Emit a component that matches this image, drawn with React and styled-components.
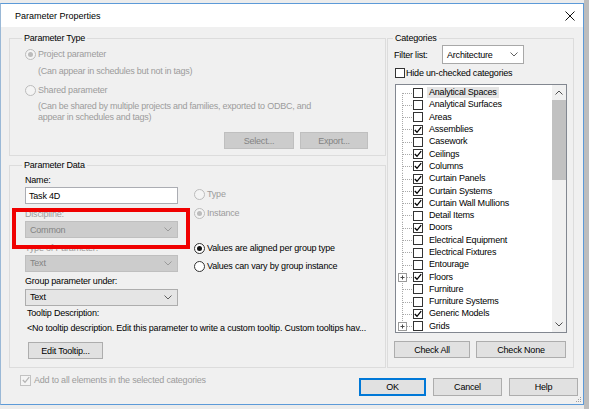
import styled, { createGlobalStyle } from "styled-components"

const GlobalStyle = createGlobalStyle`
  html, body {
    margin: 0;
    padding: 0;
    background: #c6c6c6;
  }
  body {
    font-family: "Liberation Sans", Arial, sans-serif;
    font-size: 9px;
    letter-spacing: -0.2px;
    color: #000;
  }
  * {
    box-sizing: border-box;
  }
  button, input {
    font-family: inherit;
    font-size: inherit;
    letter-spacing: inherit;
  }
`

const categories = [
  { name: "Analytical Spaces", selected: true },
  { name: "Analytical Surfaces" },
  { name: "Areas" },
  { name: "Assemblies", checked: true },
  { name: "Casework" },
  { name: "Ceilings", checked: true },
  { name: "Columns", checked: true },
  { name: "Curtain Panels", checked: true },
  { name: "Curtain Systems", checked: true },
  { name: "Curtain Wall Mullions", checked: true },
  { name: "Detail Items" },
  { name: "Doors", checked: true },
  { name: "Electrical Equipment" },
  { name: "Electrical Fixtures" },
  { name: "Entourage" },
  { name: "Floors", checked: true, expandable: true },
  { name: "Furniture" },
  { name: "Furniture Systems" },
  { name: "Generic Models", checked: true },
  { name: "Grids", expandable: true },
]

function Radio({ label, checked, disabled }) {
  return (
    <OptionRow $disabled={disabled}>
      <RadioCircle $checked={checked} $disabled={disabled} />
      <span>{label}</span>
    </OptionRow>
  )
}

function Check({ disabled, dark }) {
  return (
    <CheckBox $disabled={disabled} $dark={dark}>
      <svg width="8" height="8" viewBox="0 0 8 8">
        <polyline points="0.8,4 3,6.3 7.2,1.2" fill="none" stroke={disabled ? "#b5b5b5" : "#000"} strokeWidth="1.3" />
      </svg>
    </CheckBox>
  )
}

function Chevron({ color = "#606060", up }) {
  return (
    <svg width="8" height="5" viewBox="0 0 8 5">
      <polyline points={up ? "0.5,4.5 4,1 7.5,4.5" : "0.5,0.5 4,4 7.5,0.5"} fill="none" stroke={color} strokeWidth="1" />
    </svg>
  )
}

function Select({ value, disabled, white, width }) {
  return (
    <SelectBox $disabled={disabled} $white={white} $width={width}>
      <span>{value}</span>
      <Chevron color={disabled ? "#9a9a9a" : "#606060"} />
    </SelectBox>
  )
}

function TreeLines({ first, expandable }) {
  return (
    <svg width="17" height="12.3" viewBox="0 0 17 12.3">
      <line x1="6.5" y1={first ? 6 : 0} x2="6.5" y2="12.3" stroke="#a8a8a8" strokeDasharray="1 1" />
      <line x1={expandable ? 11 : 7} y1="6.5" x2="16" y2="6.5" stroke="#a8a8a8" strokeDasharray="1 1" />
      {expandable && (
        <g>
          <rect x="2.5" y="2.5" width="8" height="8" fill="#fff" stroke="#9a9a9a" />
          <line x1="4.5" y1="6.5" x2="8.5" y2="6.5" stroke="#4a4a4a" />
          <line x1="6.5" y1="4.5" x2="6.5" y2="8.5" stroke="#4a4a4a" />
        </g>
      )}
    </svg>
  )
}

export default function App() {
  return (
    <>
      <GlobalStyle />
      <Page>
        <Dialog>
          <TitleBar>
            <Title>Parameter Properties</Title>
            <CloseBox>
              <svg width="10" height="10" viewBox="0 0 10 10">
                <line x1="0.5" y1="0.5" x2="9.5" y2="9.5" stroke="#111" strokeWidth="1" />
                <line x1="9.5" y1="0.5" x2="0.5" y2="9.5" stroke="#111" strokeWidth="1" />
              </svg>
            </CloseBox>
          </TitleBar>

          <Body>
            <Main>
              <LeftColumn>
                <Group $height={124}>
                  <Legend>Parameter Type</Legend>
                  <Spacer $h={4} />
                  <Radio label="Project parameter" checked disabled />
                  <Spacer $h={5.5} />
                  <Note $disabled>(Can appear in schedules but not in tags)</Note>
                  <Spacer $h={7.5} />
                  <Radio label="Shared parameter" disabled />
                  <Spacer $h={4.5} />
                  <Note $disabled>
                    (Can be shared by multiple projects and families, exported to ODBC, and
                    <br />
                    appear in schedules and tags)
                  </Note>
                  <Spacer $h={9.5} />
                  <ButtonRow>
                    <Button $disabled $width={70}>Select...</Button>
                    <Button $disabled $width={68}>Export...</Button>
                  </ButtonRow>
                </Group>

                <Group $height={209} $top={3}>
                  <Legend>Parameter Data</Legend>
                  <FieldsRow>
                    <FieldColumn>
                      <Spacer $h={3.5} />
                      <FieldLabel>Name:</FieldLabel>
                      <Spacer $h={1.5} />
                      <TextInput>Task 4D</TextInput>
                      <Spacer $h={4.5} />
                      <FieldLabel $disabled>Discipline:</FieldLabel>
                      <Spacer $h={1.5} />
                      <Select value="Common" disabled />
                      <Spacer $h={4.5} />
                      <FieldLabel $disabled>Type of Parameter:</FieldLabel>
                      <Spacer $h={1} />
                      <Select value="Text" disabled />
                      <Spacer $h={4} />
                      <FieldLabel>Group parameter under:</FieldLabel>
                      <Spacer $h={2} />
                      <Select value="Text" />
                    </FieldColumn>
                    <RadioColumn>
                      <Spacer $h={17} />
                      <Radio label="Type" disabled />
                      <Spacer $h={7} />
                      <Radio label="Instance" checked disabled />
                      <Spacer $h={23} />
                      <Radio label="Values are aligned per group type" checked />
                      <Spacer $h={6} />
                      <Radio label="Values can vary by group instance" />
                    </RadioColumn>
                  </FieldsRow>
                  <Spacer $h={2} />
                  <TooltipText>Tooltip Description:</TooltipText>
                  <Spacer $h={4} />
                  <TooltipText>
                    &lt;No tooltip description. Edit this parameter to write a custom tooltip. Custom tooltips hav...
                  </TooltipText>
                  <Spacer $h={8.5} />
                  <Button $width={75} $indent={3}>Edit Tooltip...</Button>
                </Group>

                <Highlight />
              </LeftColumn>

              <RightColumn>
                <Group $height={336} $padLeft={6} $padRight={6}>
                  <Legend $shift={-1}>Categories</Legend>
                  <Spacer $h={1} />
                  <FilterRow>
                    <FilterLabel>Filter list:</FilterLabel>
                    <Select value="Architecture" white width={82} />
                  </FilterRow>
                  <Spacer $h={3} />
                  <HideRow>
                    <CheckBox $dark $empty />
                    <span>Hide un-checked categories</span>
                  </HideRow>
                  <Spacer $h={6} />
                  <ListBox>
                    <ListItems>
                      {categories.map((c, i) => (
                        <ListRow key={c.name}>
                          <TreeLines first={i === 0} expandable={c.expandable} />
                          {c.checked ? <Check dark /> : <CheckBox $dark $empty />}
                          <ItemText $selected={c.selected}>{c.name}</ItemText>
                        </ListRow>
                      ))}
                    </ListItems>
                    <ScrollBar>
                      <ScrollArrow>
                        <Chevron up color="#505050" />
                      </ScrollArrow>
                      <Thumb />
                      <ScrollTrack />
                      <ScrollArrow>
                        <Chevron color="#505050" />
                      </ScrollArrow>
                    </ScrollBar>
                  </ListBox>
                  <Spacer $h={8} />
                  <ButtonRow $start>
                    <Button $width={76}>Check All</Button>
                    <Button $width={90}>Check None</Button>
                  </ButtonRow>
                </Group>
              </RightColumn>
            </Main>

            <BottomRow>
              <AddRow>
                <Check disabled />
                <span>Add to all elements in the selected categories</span>
              </AddRow>
              <DialogButtons>
                <Button $width={67} $height={18} $default>OK</Button>
                <Button $width={69} $height={18}>Cancel</Button>
                <Button $width={69} $height={18}>Help</Button>
              </DialogButtons>
            </BottomRow>
          </Body>

          <Grip>
            <svg width="6" height="6" viewBox="0 0 6 6">
              <rect x="4" y="0" width="1" height="1" fill="#a0a0a0" />
              <rect x="2" y="2" width="1" height="1" fill="#a0a0a0" />
              <rect x="4" y="2" width="1" height="1" fill="#a0a0a0" />
              <rect x="0" y="4" width="1" height="1" fill="#a0a0a0" />
              <rect x="2" y="4" width="1" height="1" fill="#a0a0a0" />
              <rect x="4" y="4" width="1" height="1" fill="#a0a0a0" />
            </svg>
          </Grip>
        </Dialog>
      </Page>
    </>
  )
}

const Page = styled.div`
  width: 589px;
  height: 409px;
  padding-top: 3px;
  background: linear-gradient(to right, #ececec 0, #ececec 584px, #bdbdbd 584px);
  overflow: hidden;
`
const Dialog = styled.div`
  position: relative;
  width: 584px;
  height: 402px;
  border: 1px solid #5c9ad8;
  border-left-color: #9ab8d6;
  display: flex;
  flex-direction: column;
  background: #f0f0f0;
`
const TitleBar = styled.div`
  height: 23px;
  background: #fff;
  display: flex;
  align-items: center;
  justify-content: space-between;
  padding-left: 14px;
`
const Title = styled.span`
  font-size: 9px;
  letter-spacing: 0;
  color: #000;
`
const CloseBox = styled.div`
  width: 26px;
  height: 23px;
  display: flex;
  align-items: center;
  justify-content: center;
`
const Body = styled.div`
  flex: 1;
  display: flex;
  flex-direction: column;
  padding: 5px 0 0 8px;
`
const Main = styled.div`
  display: flex;
  height: 336px;
`
const LeftColumn = styled.div`
  position: relative;
  width: 377px;
  display: flex;
  flex-direction: column;
`
const RightColumn = styled.div`
  width: 187px;
  margin-left: 1px;
  display: flex;
  flex-direction: column;
`
const Group = styled.fieldset`
  margin: ${(p) => p.$top || 0}px 0 0 0;
  padding: 0 ${(p) => p.$padRight ?? 17}px 0 ${(p) => p.$padLeft ?? 15}px;
  height: ${(p) => p.$height}px;
  border: 1px solid #dcdcdc;
  min-width: 0;
  display: flex;
  flex-direction: column;
`
const Legend = styled.legend`
  padding: 0 2px;
  margin-left: ${(p) => p.$shift ?? -3}px;
  line-height: 12px;
  font-size: 9px;
  color: #000;
`
const Spacer = styled.div`
  height: ${(p) => p.$h}px;
  flex-shrink: 0;
`
const OptionRow = styled.div`
  display: flex;
  align-items: center;
  gap: 2px;
  height: 12px;
  color: ${(p) => (p.$disabled ? "#9c9c9c" : "#000")};
  white-space: nowrap;
`
const RadioCircle = styled.span`
  width: 11px;
  height: 11px;
  border-radius: 50%;
  border: 1px solid ${(p) => (p.$disabled ? "#bcbcbc" : "#333")};
  background: ${(p) => (p.$disabled ? "#f4f4f4" : "#fff")};
  display: flex;
  align-items: center;
  justify-content: center;
  flex-shrink: 0;
  &::after {
    content: "";
    width: 5px;
    height: 5px;
    border-radius: 50%;
    background: ${(p) => (p.$disabled ? "#bcbcbc" : "#111")};
    display: ${(p) => (p.$checked ? "block" : "none")};
  }
`
const Note = styled.div`
  padding-left: 13px;
  line-height: 11px;
  color: ${(p) => (p.$disabled ? "#9c9c9c" : "#000")};
  letter-spacing: -0.25px;
  white-space: nowrap;
`
const ButtonRow = styled.div`
  display: flex;
  justify-content: ${(p) => (p.$start ? "flex-start" : "flex-end")};
  gap: 6px;
`
const Button = styled.button`
  width: ${(p) => p.$width}px;
  height: ${(p) => p.$height || 17}px;
  margin: 0 0 0 ${(p) => p.$indent || 0}px;
  padding: 0;
  background: ${(p) => (p.$disabled ? "#cccccc" : "#e1e1e1")};
  border: 1px solid ${(p) => (p.$disabled ? "#bfbfbf" : p.$default ? "#0078d7" : "#adadad")};
  box-shadow: ${(p) => (p.$default ? "inset 0 0 0 1px #0078d7" : "none")};
  color: ${(p) => (p.$disabled ? "#838383" : "#000")};
  display: flex;
  align-items: center;
  justify-content: center;
  flex-shrink: 0;
`
const FieldsRow = styled.div`
  display: flex;
`
const FieldColumn = styled.div`
  width: 153px;
  display: flex;
  flex-direction: column;
`
const RadioColumn = styled.div`
  margin-left: 16px;
  display: flex;
  flex-direction: column;
`
const FieldLabel = styled.div`
  line-height: 11px;
  color: ${(p) => (p.$disabled ? "#9c9c9c" : "#000")};
  white-space: nowrap;
`
const TextInput = styled.div`
  height: 17px;
  border: 1px solid #abadb3;
  background: #fff;
  display: flex;
  align-items: center;
  padding-left: 3px;
`
const SelectBox = styled.div`
  width: ${(p) => (p.$width ? `${p.$width}px` : "100%")};
  height: ${(p) => (p.$white ? 19 : 17)}px;
  border: 1px solid ${(p) => (p.$disabled ? "#bfbfbf" : p.$white ? "#a8a8a8" : "#adadad")};
  background: ${(p) => (p.$disabled ? "#cccccc" : p.$white ? "#fff" : "#e5e5e5")};
  color: ${(p) => (p.$disabled ? "#838383" : "#000")};
  display: flex;
  align-items: center;
  justify-content: space-between;
  padding: 0 5px 0 4px;
  flex-shrink: 0;
`
const TooltipText = styled.div`
  margin-left: 2px;
  line-height: 11px;
  white-space: nowrap;
`
const Highlight = styled.div`
  position: absolute;
  left: 3px;
  top: 176px;
  width: 178px;
  height: 41px;
  border: 4px solid #f00000;
  pointer-events: none;
`
const FilterRow = styled.div`
  display: flex;
  align-items: center;
`
const FilterLabel = styled.span`
  width: 48px;
`
const HideRow = styled.div`
  display: flex;
  align-items: center;
  gap: 1px;
  height: 11px;
  padding-left: 1px;
  white-space: nowrap;
`
const CheckBox = styled.span`
  width: ${(p) => (p.$dark ? 10 : 11)}px;
  height: ${(p) => (p.$dark ? 10 : 11)}px;
  border: 1px solid ${(p) => (p.$disabled ? "#c2c2c2" : "#333")};
  background: ${(p) => (p.$disabled ? "#f4f4f4" : "#fff")};
  display: flex;
  align-items: center;
  justify-content: center;
  flex-shrink: 0;
`
const ListBox = styled.div`
  margin-left: 1px;
  width: 172px;
  height: 249px;
  border: 1px solid #828790;
  background: #fff;
  display: flex;
  flex-shrink: 0;
`
const ListItems = styled.div`
  flex: 1;
  padding-top: 1.5px;
  overflow: hidden;
`
const ListRow = styled.div`
  height: 12.3px;
  display: flex;
  align-items: center;
  white-space: nowrap;
`
const ItemText = styled.span`
  margin-left: 4px;
  padding: 0 2px;
  line-height: 11px;
  background: ${(p) => (p.$selected ? "#e5e5e5" : "transparent")};
`
const ScrollBar = styled.div`
  width: 14px;
  display: flex;
  flex-direction: column;
  background: #f0f0f0;
`
const ScrollArrow = styled.div`
  height: 15px;
  display: flex;
  align-items: center;
  justify-content: center;
`
const Thumb = styled.div`
  height: 80px;
  background: #c1c1c1;
`
const ScrollTrack = styled.div`
  flex: 1;
`
const BottomRow = styled.div`
  margin-top: 10px;
  height: 18px;
  display: flex;
  align-items: flex-start;
  padding: 0 5px 0 11px;
`
const AddRow = styled.div`
  margin-top: -4px;
  height: 12px;
  display: flex;
  align-items: center;
  gap: 3px;
  color: #9c9c9c;
  white-space: nowrap;
`
const DialogButtons = styled.div`
  margin-left: auto;
  display: flex;
  gap: 7px;
`
const Grip = styled.div`
  position: absolute;
  right: 1px;
  bottom: 1px;
  width: 6px;
  height: 6px;
  display: flex;
`
